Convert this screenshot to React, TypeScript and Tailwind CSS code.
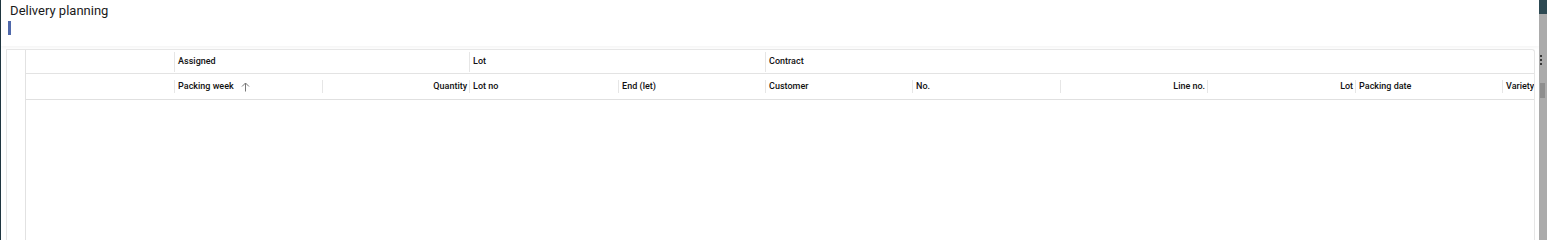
import React from 'react';

const groups = [
  { label: 'Assigned', w: 'w-[295px]' },
  { label: 'Lot', w: 'w-[296px]' },
  { label: 'Contract', w: 'flex-1' },
];

const cols: { label: string; w: string; right?: boolean; sort?: boolean }[] = [
  { label: 'Packing week', w: 'w-[148px]', sort: true },
  { label: 'Quantity', w: 'w-[147px]', right: true },
  { label: 'Lot no', w: 'w-[149px]' },
  { label: 'End (let)', w: 'w-[147px]' },
  { label: 'Customer', w: 'w-[147px]' },
  { label: 'No.', w: 'w-[148px]' },
  { label: 'Line no.', w: 'w-[147px]', right: true },
  { label: 'Lot', w: 'w-[148px]', right: true },
  { label: 'Packing date', w: 'w-[147px]' },
  { label: 'Variety', w: 'flex-1' },
];

function SortUp() {
  return (
    <svg width="9" height="10" viewBox="0 0 9 10" className="ml-[7px] text-[#777]">
      <path d="M4.5 9.5V1M1 4.5 4.5 1 8 4.5" fill="none" stroke="currentColor" strokeWidth="1" />
    </svg>
  );
}

export default function App() {
  return (
    <div
      className="flex h-[240px] w-[1547px] overflow-hidden bg-white text-[#111]"
      style={{ fontFamily: 'Roboto, "Liberation Sans", sans-serif' }}
    >
      <div className="w-[2px] bg-[#1f3640]" />
      <div className="flex flex-1 flex-col">
        {/* Title */}
        <div className="h-[46px] pl-[9px] pt-[3px] shadow-[0_2px_3px_rgba(0,0,0,0.04)]">
          <div className="text-[13px] leading-[16px] text-[#1a1a1a]">Delivery planning</div>
          <div className="mt-[2px] ml-[-2px] h-[14px] w-[3px] bg-[#4f68aa]" />
        </div>

        {/* Table */}
        <div className="ml-[5px] mr-[4px] mt-[3px] flex flex-1 rounded-tr-[3px] border-l border-r border-t border-[#e6e6e6]">
          <div className="w-[19px] border-r border-[#e2e2e2]" />
          <div className="flex flex-1 flex-col">
            <div className="flex h-[24px] border-b border-[#e3e3e3]">
              <div className="w-[148px]" />
              {groups.map((g) => (
                <div key={g.label} className={`${g.w} flex items-center`}>
                  <div className="mr-[3px] h-[20px] w-px bg-[#e6e6e6]" />
                  <span className="text-[9px] font-medium">{g.label}</span>
                </div>
              ))}
            </div>
            <div className="flex h-[26px] border-b border-[#e0e0e0]">
              <div className="w-[148px]" />
              {cols.map((c) => (
                <div key={c.label} className={`${c.w} flex items-center overflow-hidden`}>
                  <div className="h-[13px] w-px shrink-0 bg-[#e6e6e6]" />
                  <div
                    className={`flex flex-1 items-center whitespace-nowrap text-[9px] font-medium ${
                      c.right ? 'justify-end pr-[2px]' : 'pl-[3px]'
                    }`}
                  >
                    {c.label}
                    {c.sort && <SortUp />}
                  </div>
                </div>
              ))}
            </div>
            <div className="flex-1" />
          </div>
        </div>
      </div>

      {/* Right edge */}
      <div className="relative w-[14px] bg-white">
        <div className="absolute bottom-0 right-0 top-0 w-[8px] bg-[#ababab]">
          <div className="h-[14px] bg-[#2d4952]" />
          <div className="absolute left-[1px] top-[83px] h-[15px] w-[5px] bg-[#8e8e8e]" />
        </div>
        <div className="absolute left-[1px] top-[55px] flex flex-col gap-[2px]">
          <span className="h-[2px] w-[2px] rounded-full bg-[#111]" />
          <span className="h-[2px] w-[2px] rounded-full bg-[#111]" />
          <span className="h-[2px] w-[2px] rounded-full bg-[#111]" />
        </div>
      </div>
    </div>
  );
}
